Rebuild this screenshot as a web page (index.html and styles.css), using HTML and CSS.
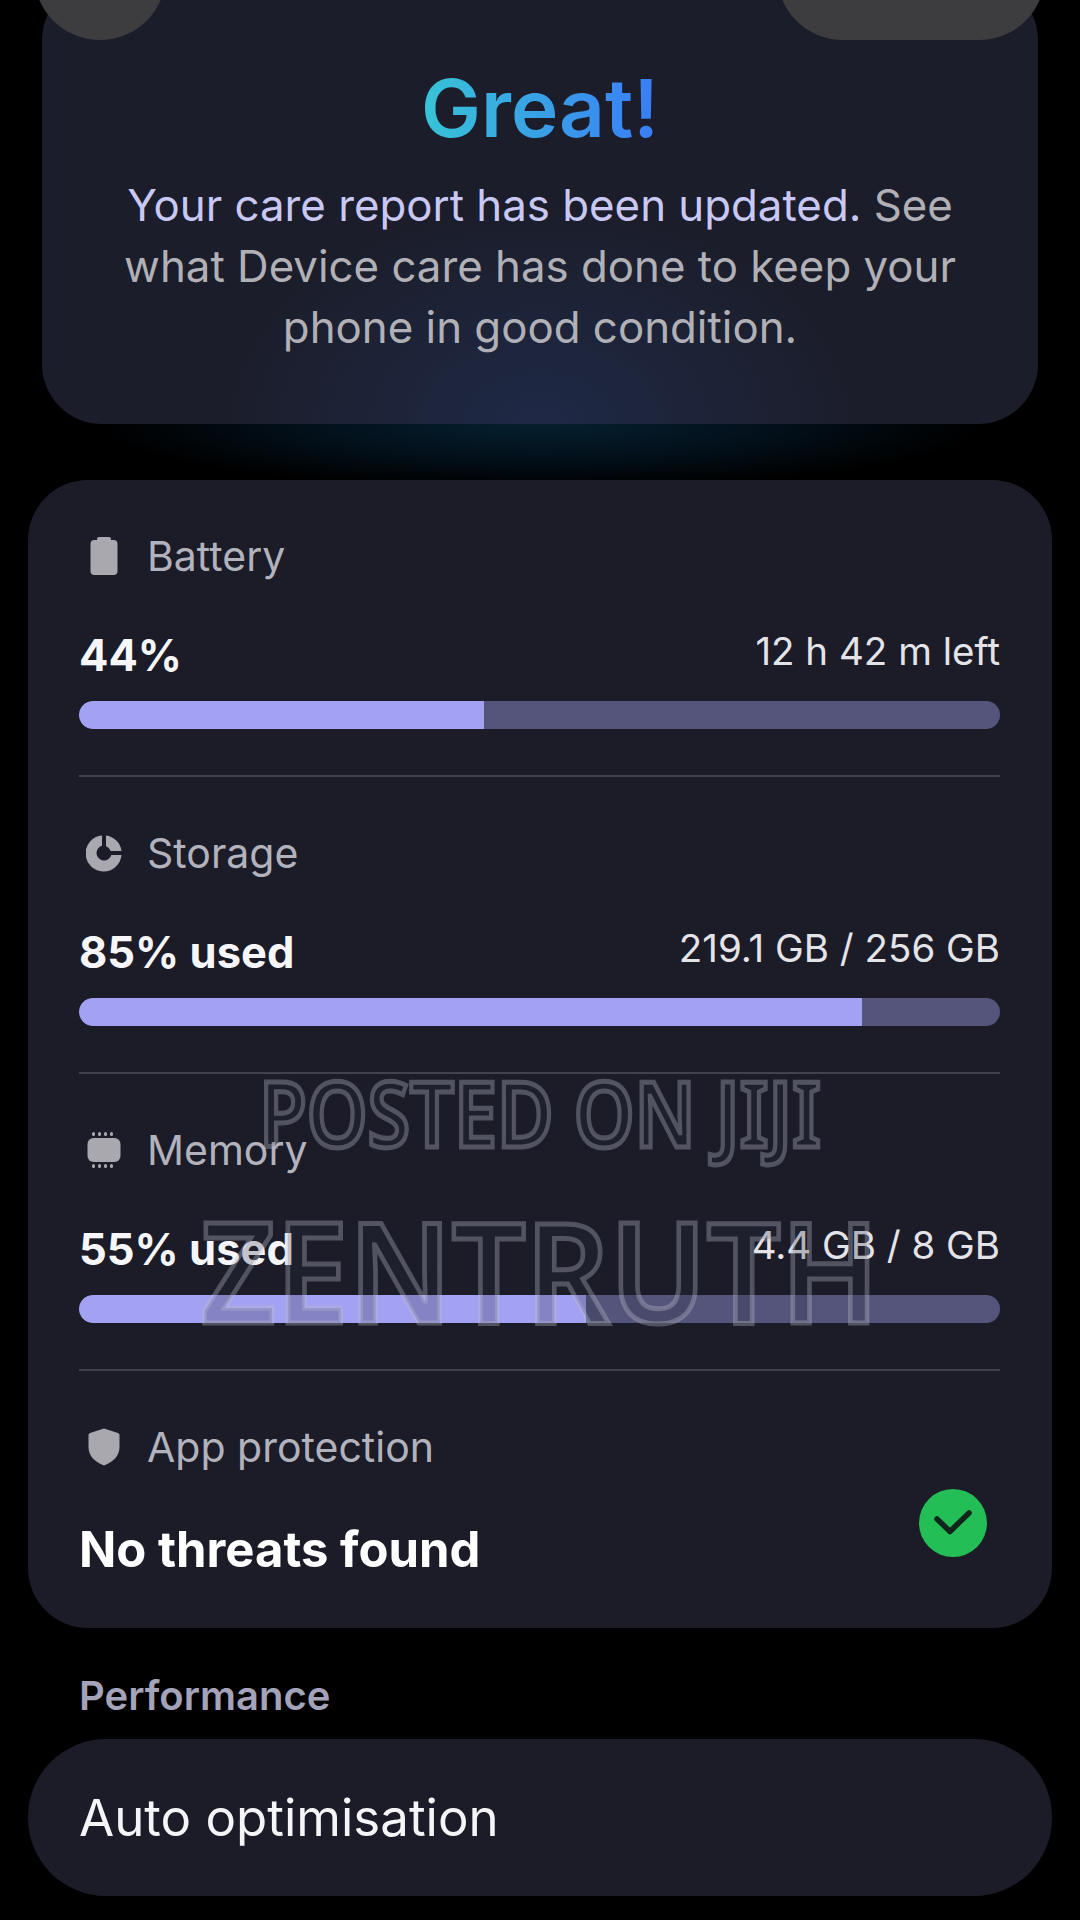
FILE: index.html
```html
<!DOCTYPE html>
<html lang="en">
<head>
<meta charset="utf-8">
<title>Device care</title>
<link rel="stylesheet" href="styles.css">
</head>
<body>
<div class="page">
  <div class="pill pill-left"></div>
  <div class="pill pill-right"></div>
  <section class="hero">
    <h1 class="great">Great!</h1>
    <p class="lead"><span class="lead-hi">Your care report has been updated.</span> See what Device care has done to keep your phone in good condition.</p>
  </section>
  <section class="card stats">
    <div class="stat">
      <div class="head">
        <span class="icon"><svg viewBox="0 0 36 38" width="36" height="38"><path fill="#a8a8ae" d="M13 0h10a2 2 0 0 1 2 2v1h2.500a4 4 0 0 1 4 4v27a4 4 0 0 1-4 4h-19a4 4 0 0 1-4-4V7a4 4 0 0 1 4-4H11V2a2 2 0 0 1 2-2z"/></svg></span>
        <span class="label">Battery</span>
      </div>
      <div class="values"><span class="big">44%</span><span class="side">12 h 42 m left</span></div>
      <div class="bar"><div class="fill fill-44"></div></div>
    </div>
    <div class="stat">
      <div class="head">
        <span class="icon"><svg viewBox="0 0 36 38" width="36" height="38"><path fill="#a8a8ae" d="M16 1.500v10.300a7.500 7.500 0 1 0 9.300 9.200h10.200A18 18 0 1 1 16 1.500z"/><path fill="#a8a8ae" d="M20 1.500A18 18 0 0 1 35.500 17H24.600a7.500 7.500 0 0 0-4.600-4.800z"/></svg></span>
        <span class="label">Storage</span>
      </div>
      <div class="values"><span class="big">85% used</span><span class="side">219.1 GB / 256 GB</span></div>
      <div class="bar"><div class="fill fill-85"></div></div>
    </div>
    <div class="stat">
      <div class="head">
        <span class="icon"><svg viewBox="0 0 36 38" width="36" height="38"><rect x="1.500" y="7" width="33" height="24" rx="6" fill="#a8a8ae"/><g fill="#a8a8ae"><rect x="6" y="1" width="3" height="4" rx="1.500"/><rect x="12" y="1" width="3" height="4" rx="1.500"/><rect x="18" y="1" width="3" height="4" rx="1.500"/><rect x="24" y="1" width="3" height="4" rx="1.500"/><rect x="6" y="33" width="3" height="4" rx="1.500"/><rect x="12" y="33" width="3" height="4" rx="1.500"/><rect x="18" y="33" width="3" height="4" rx="1.500"/><rect x="24" y="33" width="3" height="4" rx="1.500"/></g></svg></span>
        <span class="label">Memory</span>
      </div>
      <div class="values"><span class="big">55% used</span><span class="side">4.4 GB / 8 GB</span></div>
      <div class="bar"><div class="fill fill-55"></div></div>
    </div>
    <div class="stat stat-last">
      <div class="head">
        <span class="icon"><svg viewBox="0 0 36 38" width="36" height="38"><path fill="#a8a8ae" d="M18 0.500l14 4.500a2.500 2.500 0 0 1 1.500 2.300V19c0 8.500-6 15-15.500 18.500C8.500 34 2.500 27.500 2.500 19V7.300A2.500 2.500 0 0 1 4 5z"/></svg></span>
        <span class="label">App protection</span>
      </div>
      <div class="threat-row">
        <span class="threats">No threats found</span>
        <span class="check"><svg viewBox="0 0 68 68" width="68" height="68"><path d="M18 30l13 12.500L50 24" fill="none" stroke="#10261c" stroke-width="5.500" stroke-linecap="round" stroke-linejoin="round"/></svg></span>
      </div>
    </div>
  </section>
  <h2 class="section-title">Performance</h2>
  <section class="card auto"><span class="auto-text">Auto optimisation</span></section>
  <div class="mark mark-top">POSTED ON JIJI</div>
  <div class="mark mark-main">ZENTRUTH</div>
</div>
</body>
</html>
```

FILE: styles.css
```css
* { box-sizing: border-box; }
html, body { margin: 0; padding: 0; background: #000; }
body { font-family: Inter, "Noto Sans", sans-serif; }
.page {
  position: relative;
  width: 1080px;
  height: 1920px;
  overflow: hidden;
  padding: 0 28px;
  background: radial-gradient(ellipse 440px 64px at 540px 424px, #05202f 0%, #03111c 50%, #000 100%) no-repeat;
}
.pill { position: absolute; top: -100px; height: 140px; background: #3d3d40; border-radius: 66px; }
.pill-left { left: 34px; width: 132px; }
.pill-right { left: 777px; width: 268px; }
.hero {
  margin: -20px 14px 56px;
  height: 444px;
  padding-top: 83px;
  text-align: center;
  border-radius: 60px;
  background: radial-gradient(ellipse 320px 220px at 50% 100%, #1f2946 0%, #1d2337 55%, #1b1d2a 100%) #1b1d2a;
}
.great {
  margin: 0;
  font-size: 80px;
  line-height: 90px;
  font-weight: 600;
  display: inline-block;
  background: linear-gradient(90deg, #38c4d6, #3a7cf6);
  -webkit-background-clip: text;
  background-clip: text;
  color: transparent;
}
.lead {
  margin: 22px 0 0;
  padding: 0 60px;
  font-size: 43.800px;
  line-height: 61px;
  color: #b0b0b6;
}
.lead-hi { color: #c9c8f4; }
.card { background: #1b1c28; border-radius: 60px; }
.stats { height: 1148px; padding: 0 52px 0 51px; }
.stat { height: 297px; padding-top: 57px; border-bottom: 2px solid #41424c; }
.stat-last { border-bottom: 0; position: relative; }
.head { display: flex; align-items: center; height: 38px; }
.icon { width: 36px; height: 38px; margin-left: 7px; display: flex; }
.label { margin-left: 25px; font-size: 41px; line-height: 38px; color: #b2b2bd; }
.values { display: flex; justify-content: space-between; align-items: flex-end; height: 52px; margin-top: 54px; }
.big { font-size: 43.500px; line-height: 52px; font-weight: 700; color: #f7f7fb; }
.side { font-size: 38.500px; line-height: 52px; color: #e4e4e8; position: relative; top: -4px; }
.bar { margin-top: 20px; height: 28px; border-radius: 14px; background: #55557c; overflow: hidden; }
.fill { height: 100%; background: #a3a1f2; border-radius: 14px 0 0 14px; }
.fill-44 { width: 44%; }
.fill-85 { width: 85%; }
.fill-55 { width: 55%; }
.threat-row { display: flex; justify-content: space-between; margin-top: 23px; padding-right: 13px; }
.threats { font-size: 49px; line-height: 56px; font-weight: 700; color: #fff; margin-top: 33px; }
.check { width: 68px; height: 68px; border-radius: 50%; background: #23bf56; display: flex; }
.section-title { margin: 46px 51px 0; font-size: 40px; line-height: 44px; font-weight: 600; color: #a3a3ba; }
.auto { margin-top: 21px; height: 157px; border-radius: 78px; padding: 0 51px; display: flex; align-items: center; }
.auto-text { font-size: 51px; color: #f5f5f8; }
.mark {
  position: absolute;
  left: 0;
  width: 1080px;
  text-align: center;
  font-family: "Noto Sans", sans-serif;
  font-weight: 600;
  color: rgba(40, 44, 60, 0.25);
  -webkit-text-stroke: 5px rgba(190, 190, 205, 0.34);
  white-space: nowrap;
  pointer-events: none;
}
.mark-top { top: 1050px; font-size: 91px; line-height: 124px; transform: scaleX(0.849); }
.mark-main { top: 1174px; font-size: 140px; line-height: 190px; transform: scaleX(0.93); }
```
